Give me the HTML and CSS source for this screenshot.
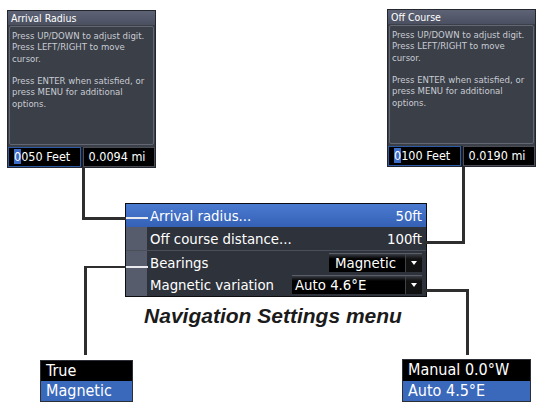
FILE: index.html
```html
<!DOCTYPE html>
<html>
<head>
<meta charset="utf-8">
<link rel="stylesheet" href="styles.css">
</head>
<body>
<div class="canvas">
  <div class="dialog dlg-left">
    <div class="dlg-title">Arrival Radius</div>
    <div class="dlg-body">
      <p>Press UP/DOWN to adjust digit.<br>Press LEFT/RIGHT to move<br>cursor.</p>
      <p>Press ENTER when satisfied, or<br>press MENU for additional<br>options.</p>
    </div>
    <div class="dlg-fields">
      <div class="field active"><span class="cursor">0</span>050 Feet</div>
      <div class="field">0.0094 mi</div>
    </div>
  </div>

  <div class="dialog dlg-right">
    <div class="dlg-title">Off Course</div>
    <div class="dlg-body">
      <p>Press UP/DOWN to adjust digit.<br>Press LEFT/RIGHT to move<br>cursor.</p>
      <p>Press ENTER when satisfied, or<br>press MENU for additional<br>options.</p>
    </div>
    <div class="dlg-fields">
      <div class="field active"><span class="cursor">0</span>100 Feet</div>
      <div class="field">0.0190 mi</div>
    </div>
  </div>

  <div class="menu">
    <div class="row selected"><div class="strip"></div><div class="cell"><span>Arrival radius...</span><span>50ft</span></div></div>
    <div class="row"><div class="strip"></div><div class="cell"><span>Off course distance...</span><span>100ft</span></div></div>
    <div class="row sep"><div class="strip"></div><div class="cell"><span>Bearings</span>
      <div class="dd dd-bear"><span class="dd-text">Magnetic</span><span class="dd-arrow"></span></div></div></div>
    <div class="row"><div class="strip"></div><div class="cell"><span>Magnetic variation</span>
      <div class="dd dd-var"><span class="dd-text">Auto 4.6°E</span><span class="dd-arrow"></span></div></div></div>
  </div>

  <div class="caption">Navigation Settings menu</div>

  <div class="popup pop-bear">
    <div class="opt">True</div>
    <div class="opt on">Magnetic</div>
  </div>
  <div class="popup pop-var">
    <div class="opt">Manual 0.0°W</div>
    <div class="opt on">Auto 4.5°E</div>
  </div>

  <div class="ln ln1v"></div>
  <div class="ln ln1h"></div>
  <div class="ln white ln1w"></div>

  <div class="ln ln2v"></div>
  <div class="ln ln2h"></div>

  <div class="ln ln3h"></div>
  <div class="ln ln3v"></div>
  <div class="ln white ln3w"></div>

  <div class="ln ln4h"></div>
  <div class="ln ln4v"></div>
</div>
</body>
</html>
```

FILE: styles.css
```css
html, body {
  margin: 0;
  padding: 0;
  background: #fff;
}
.canvas {
  position: relative;
  width: 545px;
  height: 407px;
  overflow: hidden;
  font-family: "Liberation Sans", Arial, sans-serif;
}
.dialog, .menu, .popup {
  font-family: "DejaVu Sans Condensed", "DejaVu Sans", sans-serif;
  font-stretch: condensed;
}

/* dialogs */
.dialog {
  position: absolute;
  width: 149px;
  height: 158px;
  box-sizing: border-box;
  background: #3a3f48;
  border: 1px solid #23262c;
  display: flex;
  flex-direction: column;
}
.dlg-left { left: 7px; top: 10px; }
.dlg-right { left: 387px; top: 9px; }
.dlg-title {
  height: 14px;
  line-height: 14px;
  background: linear-gradient(#5d6375, #4b5061);
  color: #fff;
  font-size: 10.5px;
  padding-left: 3px;
}
.dlg-body {
  flex: 1;
  margin: 1px 1px 2px 1px;
  border: 1px solid #626773;
  border-radius: 2px;
  padding: 3px 2px 0 2px;
  font-size: 9.5px;
  line-height: 11.3px;
  color: #c9ccd3;
}
.dlg-body p { margin: 0 0 11.3px 0; }
.dlg-fields {
  display: flex;
  height: 20px;
  gap: 2px;
  background: #1a1c20;
}
.field {
  flex: 1;
  box-sizing: border-box;
  background: #000;
  color: #fff;
  font-size: 12.5px;
  line-height: 18px;
  border: 1px solid #4a4d55;
  padding-left: 5px;
}
.field.active { border-color: #2f5aa6; }
.cursor { background: #3c6cc6; }

/* menu */
.menu {
  position: absolute;
  left: 125px;
  top: 203px;
  width: 302px;
  box-sizing: border-box;
  border: 1px solid #0c0d10;
  background: #2d3139;
  display: flex;
  flex-direction: column;
}
.row {
  display: flex;
  height: 23px;
}
.strip {
  width: 21px;
  background: #565c6b;
}
.cell {
  flex: 1;
  display: flex;
  align-items: center;
  justify-content: space-between;
  padding: 0 4px 0 3px;
  color: #fff;
  font-size: 14.8px;
  background: #2e323a;
}
.row.selected .strip,
.row.selected .cell {
  background: linear-gradient(#4a7ad0, #3461b6);
}
.row.sep .strip,
.row.sep .cell {
  border-top: 1px solid #4a4f5a;
}
.dd {
  display: flex;
  height: 19px;
  background: linear-gradient(#3a3d44 0, #000 5px);
  border-top: 1px solid #5a5e68;
  box-sizing: border-box;
}
.dd-bear { width: 93px; }
.dd-var { width: 130px; }
.dd-text {
  flex: 1;
  padding-left: 6px;
  line-height: 18px;
  color: #fff;
}
.dd-var .dd-text { padding-left: 3px; }
.dd-arrow {
  width: 16px;
  border-left: 1px solid #3e424a;
  background: linear-gradient(#3a3d44 0, #111 5px);
  position: relative;
}
.dd-arrow::after {
  content: "";
  position: absolute;
  left: 5px;
  top: 7px;
  border-left: 3px solid transparent;
  border-right: 3px solid transparent;
  border-top: 4px solid #fff;
}

.caption {
  position: absolute;
  left: 110px;
  top: 302px;
  width: 326px;
  text-align: center;
  font-weight: bold;
  font-style: italic;
  font-size: 21px;
  line-height: 28px;
  color: #1b1b1b;
}

/* popups */
.popup {
  position: absolute;
  box-sizing: border-box;
  border: 1px solid #2c2f36;
  display: flex;
  flex-direction: column;
}
.pop-bear { left: 40px; top: 360px; width: 93px; height: 42px; }
.pop-var { left: 402px; top: 359px; width: 129px; height: 43px; }
.opt {
  flex: 1;
  background: #000;
  color: #fff;
  font-size: 16px;
  line-height: 20px;
  padding-left: 5px;
}
.opt.on { background: #3a68bb; }

/* connector lines */
.ln { position: absolute; background: #2e2e2e; }
.ln.white { background: #e8eaf0; }
.ln1v { left: 82px; top: 167px; width: 3px; height: 53px; }
.ln1h { left: 82px; top: 217px; width: 44px; height: 3px; }
.ln1w { left: 126px; top: 217px; width: 22px; height: 2px; }

.ln2v { left: 462px; top: 167px; width: 3px; height: 77px; }
.ln2h { left: 424px; top: 241px; width: 41px; height: 3px; }

.ln3h { left: 84px; top: 266px; width: 42px; height: 2px; }
.ln3v { left: 84px; top: 266px; width: 3px; height: 89px; }
.ln3w { left: 126px; top: 266px; width: 22px; height: 2px; }

.ln4h { left: 424px; top: 289px; width: 45px; height: 3px; }
.ln4v { left: 466px; top: 289px; width: 3px; height: 66px; }
```
